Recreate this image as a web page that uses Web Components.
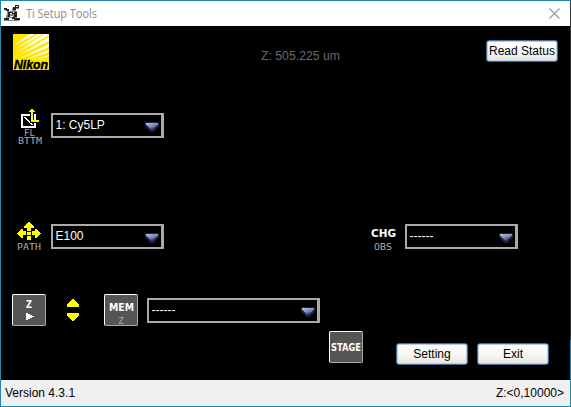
<!DOCTYPE html>
<html lang="en"><head><meta charset="utf-8"><title>Ti Setup Tools</title>
<style>body{margin:0;background:#fff;font:12px "Liberation Sans",Arial,sans-serif}</style></head>
<body><ti-window></ti-window>
<script>
const define=(name,html,init)=>customElements.define(name,class extends HTMLElement{
 constructor(){super();const t=document.createElement('template');t.innerHTML=html;
 this.attachShadow({mode:'open'}).append(t.content.cloneNode(true));}
 connectedCallback(){if(init)init(this,this.shadowRoot);}
});

define('ti-combo',`<style>
:host{box-sizing:border-box;display:flex;justify-content:space-between;width:113px;height:25px;border:2px solid #aaa;border-right-width:3px;background:#000;color:#fff;padding:0 2px 0 2.5px;line-height:20px;white-space:pre}
svg{margin-top:7px;flex:none}
</style><span><slot></slot></span>
<svg width="14" height="10" shape-rendering="crispEdges"><defs><linearGradient id="g" x1="0" y1="0" x2=".6" y2="1"><stop offset="0" stop-color="#bcc4e4"/><stop offset=".6" stop-color="#7883ae"/><stop offset="1" stop-color="#242e54"/></linearGradient></defs>
<path d="M0 0H14V5H13V6H12V7H11V8H10V9H9V10H5V9H4V8H3V7H2V6H1V5H0Z" fill="#1b2344"/><path d="M1 1H13V3H12V4H11V5H10V6H9V7H8V8H6V7H5V6H4V5H3V4H2V3H1Z" fill="url(#g)"/></svg>`);

define('ti-button',`<style>
:host{display:block;width:72px;height:22px}
button{all:unset;box-sizing:border-box;display:block;width:100%;height:100%;border:1px solid #42709c;border-radius:3px;background:linear-gradient(#fff,#f5f5f2 60%,#e6e3dc);box-shadow:inset 0 0 0 1px #b4cde4;color:#000;text-align:center;line-height:20px;white-space:nowrap}
</style><button><slot></slot></button>`);

define('ti-tile',`<style>
:host{box-sizing:border-box;display:block;width:34px;height:32px;border:1px solid;border-color:#fff #aaa #aaa #fff;border-radius:2px;background:#555}
</style><slot></slot>`);

define('ti-logo',`<style>:host{display:block;width:36px;height:36px}svg{display:block}</style>
<svg width="36" height="36"><defs><linearGradient id="f" x1="1" y1="0" x2="0" y2=".7"><stop offset="0" stop-color="#fff"/><stop offset=".5" stop-color="#fff" stop-opacity=".85"/><stop offset="1" stop-color="#fff" stop-opacity="0"/></linearGradient></defs>
<rect width="36" height="36" fill="#ffe600"/>
<g fill="url(#f)"><path d="M17 0H22L0 13V11Z"/><path d="M25 0H29L0 18V16Z"/><path d="M31 0H36V1L0 22V20Z"/><path d="M36 3V7L0 25V24Z"/><path d="M36 10V13L5 26H2Z"/><path d="M36 16V18L14 26H10Z"/><path d="M36 21V22L24 26H20Z"/></g>
<text x="1" y="34.5" textLength="34" lengthAdjust="spacingAndGlyphs" font-family="Liberation Sans,Arial,sans-serif" font-size="12.5" font-weight="bold" font-style="italic" stroke="#000" stroke-width=".5">Nikon</text></svg>`);

define('ti-app-icon',`<style>:host{display:block;width:16px;height:16px}svg{display:block}</style>
<svg width="16" height="16" shape-rendering="crispEdges"><path fill="#888" d="M8 3h4v3H8zM3 6h10v7H3zM2 10h3v4H2zM12 3h3v1h-3zM0 15h15v1H0z"/><path fill="#222" d="M11 0h4v3h-4zM0 3h3v2H0zM2 4h3v2H2zM9 2h3v3H9zM4 7h9v2H4zM4 9h2v3H4zM10 9h3v3h-3zM0 13h5v2H0zM8 12h3v2H8zM10 13h6v2h-6z"/><path fill="#eee" d="M12 1h2v1h-2zM6 8h2v1H6zM9 7h1v1H9zM6 11h3v1H6z"/></svg>`);

define('ti-titlebar',`<style>
:host{display:flex;height:25px;background:#fff;color:#999;font:12.5px "Open Sans","Noto Sans",sans-serif}
ti-app-icon{margin:4px 0 0 3px}span{margin-left:5px;flex:1}
svg{margin:7px 10px 0 0}
</style><ti-app-icon></ti-app-icon><span><svg style="display:block;margin:0;overflow:visible" width="80" height="25"><text x="1" y="16.5" textLength="71" lengthAdjust="spacingAndGlyphs" fill="#8c8c8c"></text></svg></span>
<svg width="11" height="11"><path d="M.5 .5L10.5 10.5M10.5 .5L.5 10.5" stroke="#999" stroke-width="1.1"/></svg>`,
(h,r)=>r.querySelector('text').textContent=h.getAttribute('caption'));

/* Small device captions share one compact face; each has a fixed width and its baseline 9px down. */
define('ti-caption',`<style>:host{display:block;height:10px}svg{display:block;margin-left:-1px;overflow:visible}</style><svg height="12"><text x="1" y="9" lengthAdjust="spacingAndGlyphs"></text></svg>`,
(h,r)=>{const s=r.querySelector('svg'),t=r.querySelector('text'),w=+h.getAttribute('w'),b=h.hasAttribute('bold');
 s.setAttribute('width',w+2);h.style.width=w+'px';t.setAttribute('textLength',w);t.textContent=h.getAttribute('text');
 t.setAttribute('fill',h.getAttribute('color')||'#aaa');t.setAttribute('font-size',h.getAttribute('size')||'9.5');
 t.setAttribute('font-family',b?'DejaVu Sans,sans-serif':'DejaVu Sans Mono,monospace');
 if(b)t.setAttribute('font-weight','bold');});

define('ti-panel',`<style>
:host{display:block;height:354px;background:#000;box-sizing:border-box}
.row{display:flex;align-items:flex-start}
.head{height:82px;padding:8px 12px 0 12px;box-sizing:border-box;justify-content:space-between}
.z{margin:15px 0 0 66px}
.z svg{display:block}
.head ti-button{margin-top:6px}
.fl{height:112px}.path{height:74px}.mem{height:37px}
.label{width:50px;flex:none}
.label svg{display:block;margin-left:15px}
.path .label svg{margin-left:16px}
.fl ti-combo{margin-top:5px}.path ti-combo{margin-top:4px}
.obs{width:43px;margin-left:198px}
ti-tile{flex:none}
.updown{margin:5px 24px 0 21px;display:block}
.mem ti-combo{width:173px;margin:4px 0 0 9px}
.mem>ti-tile:first-child{margin-left:11px}
.foot ti-tile{margin-left:328px}
.foot ti-button{margin:12px 0 0 33px}.foot ti-button:last-child{margin-left:9px}
</style>
<div class="row head"><ti-logo></ti-logo><div class="z"><svg width="82" height="14"><text x="1" y="11" textLength="79" lengthAdjust="spacingAndGlyphs" fill="#686868">Z: 505.225 um</text></svg></div><ti-button>Read Status</ti-button></div>
<div class="row fl"><div class="label">
<svg width="28" height="21" shape-rendering="crispEdges"><path d="M5 6H20V20H5ZM7 8V18H18V8Z" fill="#fff" fill-rule="evenodd"/><path d="M8 9h2v1h1v1h1v1h1v1h1v1h1v1h1v1h1v1h-2v-1h-1v-1h-1v-1h-1v-1h-1v-1h-1v-1h-1v-1H8z" fill="#fff"/><path d="M14 5h4v7h3v3h-7z" fill="#000"/><path d="M15 4V14H23V12H17V4H19V3H18V2H17V1H15V2H14V3H13V4Z" fill="#ff0"/></svg>
<ti-caption text="FL" w="11" size="8.3" style="margin:-2px 0 0 23px"></ti-caption><ti-caption text="BTTM" w="24" size="8.8" style="margin:-2px 0 0 17px"></ti-caption></div><ti-combo>1: Cy5LP</ti-combo></div>
<div class="row path"><div class="label">
<svg width="24" height="22" shape-rendering="crispEdges"><path d="M11 2H13V3H14V4H15V5H16V6H17V8H14V11H10V8H7V6H8V5H9V4H10V3H11ZM0 13H1V12H2V11H3V10H4V9H6V11H9V15H6V18H4V17H3V16H2V15H1V14H0ZM24 13H23V12H22V11H21V10H20V9H18V11H15V15H18V18H20V17H21V16H22V15H23V14H24ZM10 12H14V15H10ZM10 16H14V20H10Z" fill="#ff0"/></svg>
<ti-caption text="PATH" w="24" style="margin:-1px 0 0 16px"></ti-caption></div><ti-combo>E100</ti-combo>
<div class="obs"><ti-caption text="CHG" bold size="11" color="#fff" w="25" style="margin:8px 0 0 9px"></ti-caption><ti-caption text="OBS" w="18" style="margin:3px 0 0 11.5px"></ti-caption></div><ti-combo>------</ti-combo></div>
<div class="row mem"><ti-tile><ti-caption text="Z" bold size="10" color="#fff" w="6" style="margin:4px 0 0 13px"></ti-caption><svg width="9" height="7" style="display:block;margin:4px 0 0 13px" shape-rendering="crispEdges"><path d="M0 0H2V1H4V2H6V3H8V4H6V5H4V6H2V7H0Z" fill="#fff"/></svg></ti-tile>
<svg class="updown" width="13" height="23" shape-rendering="crispEdges"><path d="M5 0H7V1H8V2H9V3H10V4H11V5H12V8H0V5H1V4H2V3H3V2H4V1H5ZM0 14H12V17H11V18H10V19H9V20H8V21H7V22H5V21H4V20H3V19H2V18H1V17H0Z" fill="#ff0"/></svg>
<ti-tile><ti-caption text="MEM" bold size="11" color="#fff" w="25" style="margin:7px 0 0 4px"></ti-caption><ti-caption text="Z" w="6" style="margin:3px 0 0 13px"></ti-caption></ti-tile><ti-combo>------</ti-combo></div>
<div class="row foot"><ti-tile><ti-caption text="STAGE" bold size="10.5" color="#fff" w="30" style="margin:10px 0 0 1px"></ti-caption></ti-tile><ti-button>Setting</ti-button><ti-button>Exit</ti-button></div>`);

define('ti-statusbar',`<style>:host{display:flex;justify-content:space-between;height:26px;background:#f0f0f0;color:#000;padding:0 6px 0 4px;line-height:27px;box-sizing:border-box}span:first-child{letter-spacing:.12px}</style><span>Version 4.3.1</span><span>Z:&lt;0,10000&gt;</span>`);

define('ti-window',`<style>:host{display:block;box-sizing:border-box;width:571px;height:407px;border:1px solid #2585a5;border-right:0;background:linear-gradient(#333 339px,#2585a5 339px)}
main{width:569px}</style><main><ti-titlebar caption="Ti Setup Tools"></ti-titlebar><ti-panel></ti-panel><ti-statusbar></ti-statusbar></main>`);
</script></body></html>
